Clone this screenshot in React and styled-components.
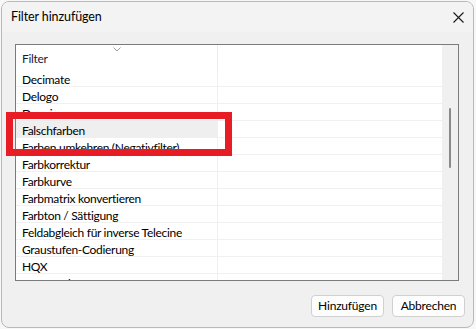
import React from "react";
import styled, { createGlobalStyle } from "styled-components";

const GlobalStyle = createGlobalStyle`
  body {
    margin: 0;
    background: #f7f7f7;
    font-family: Lato, "Noto Sans", sans-serif;
    font-size: 12px;
    letter-spacing: -0.3px;
    color: #000;
  }
`;

const Page = styled.div`
  position: relative;
  width: 476px;
  height: 329px;
  overflow: hidden;
`;

const Dialog = styled.div`
  margin: 1px 0 0 1px;
  width: 473px;
  height: 327px;
  box-sizing: border-box;
  border: 1px solid #b9b9b9;
  border-radius: 8px;
  background: #f0f0f0;
  display: flex;
  flex-direction: column;
  overflow: hidden;
`;

const TitleBar = styled.div`
  height: 30px;
  flex: none;
  display: flex;
  align-items: center;
  justify-content: space-between;
  padding: 0 9px 0 9px;
  background: #f3f3f3;
`;

const Title = styled.span`
  font-size: 12.5px;
  letter-spacing: -0.1px;
  line-height: 1;
  margin-top: 1px;
`;

const Body = styled.div`
  flex: 1;
  display: flex;
  flex-direction: column;
  padding: 12px 8px 10px 13px;
`;

const ListBox = styled.div`
  width: 444px;
  height: 237px;
  box-sizing: border-box;
  border: 1px solid #7b7b7b;
  background: #fff;
  display: flex;
  overflow: hidden;
`;

const Table = styled.div`
  flex: 1;
  display: flex;
  flex-direction: column;
  overflow: hidden;
`;

const HeaderRow = styled.div`
  flex: none;
  height: 25px;
  display: grid;
  grid-template-columns: 202px 1fr;
`;

const HeaderCell = styled.div`
  position: relative;
  display: flex;
  align-items: center;
  padding: 2px 0 0 6px;
  color: #1a1a3a;
  border-right: ${(p) => (p.$divider ? "1px solid #ececec" : "none")};
`;

const SortMark = styled.svg`
  position: absolute;
  top: 2px;
  left: 97px;
`;

const Row = styled.div`
  flex: none;
  height: 17px;
  box-sizing: border-box;
  display: grid;
  grid-template-columns: 202px 1fr;
  border-bottom: 1px solid #f0f0f0;
`;

const Cell = styled.div`
  display: flex;
  align-items: center;
  padding: 2px 0 0 6px;
  white-space: nowrap;
  line-height: 15px;
  background: ${(p) => (p.$selected ? "#efefef" : "transparent")};
  border-right: ${(p) => (p.$divider ? "1px solid #f0f0f0" : "none")};
`;

const ScrollTrack = styled.div`
  width: 16px;
  flex: none;
  background: #f0f0f0;
  display: flex;
  flex-direction: column;
  align-items: flex-start;
`;

const ScrollThumb = styled.div`
  margin: 63px 0 0 7px;
  width: 2px;
  height: 60px;
  border-radius: 1px;
  background: #8a8a8a;
`;

const Footer = styled.div`
  margin-top: 14px;
  display: flex;
  justify-content: flex-end;
  gap: 8px;
`;

const Button = styled.button`
  width: 73px;
  height: 22px;
  box-sizing: border-box;
  border: 1px solid #d0d0d0;
  border-radius: 4px;
  background: #fdfdfd;
  font-family: inherit;
  font-size: 12px;
  letter-spacing: -0.2px;
  color: #000;
  padding: 0;
  line-height: 1;
`;

const Highlight = styled.div`
  position: absolute;
  left: 6px;
  top: 112px;
  width: 226px;
  height: 44px;
  box-sizing: border-box;
  border: 7px solid #e81c24;
  pointer-events: none;
`;

const filters = [
  "Decimate",
  "Delogo",
  "Denoise",
  "Falschfarben",
  "Farben umkehren (Negativfilter)",
  "Farbkorrektur",
  "Farbkurve",
  "Farbmatrix konvertieren",
  "Farbton / Sättigung",
  "Feldabgleich für inverse Telecine",
  "Graustufen-Codierung",
  "HQX",
  "Kantenerkennung",
];

function CloseIcon() {
  return (
    <svg width="11" height="11" viewBox="0 0 11 11">
      <path d="M0.5 0.5 L10.5 10.5 M10.5 0.5 L0.5 10.5" stroke="#1a1a1a" strokeWidth="1.1" />
    </svg>
  );
}

export default function App() {
  return (
    <Page>
      <GlobalStyle />
      <Dialog>
        <TitleBar>
          <Title>Filter hinzufügen</Title>
          <CloseIcon />
        </TitleBar>
        <Body>
          <ListBox>
            <Table>
              <HeaderRow>
                <HeaderCell $divider>
                  Filter
                  <SortMark width="8" height="5" viewBox="0 0 8 5">
                    <path d="M0.5 0.5 L4 4 L7.5 0.5" fill="none" stroke="#a0a0a0" strokeWidth="1" />
                  </SortMark>
                </HeaderCell>
                <HeaderCell />
              </HeaderRow>
              {filters.map((name) => (
                <Row key={name}>
                  <Cell $divider $selected={name === "Falschfarben"}>
                    {name}
                  </Cell>
                  <Cell />
                </Row>
              ))}
            </Table>
            <ScrollTrack>
              <ScrollThumb />
            </ScrollTrack>
          </ListBox>
          <Footer>
            <Button>Hinzufügen</Button>
            <Button>Abbrechen</Button>
          </Footer>
        </Body>
      </Dialog>
      <Highlight />
    </Page>
  );
}
